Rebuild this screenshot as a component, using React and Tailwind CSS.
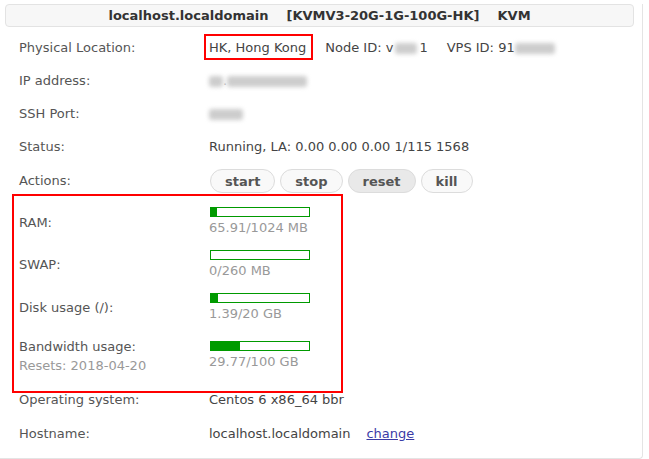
import React from 'react';

const resources = [
  { label: 'RAM:', used: 65.91, total: 1024, unit: 'MB', h: 'h-[44px]', pad: 'pt-[3px]' },
  { label: 'SWAP:', used: 0, total: 260, unit: 'MB', h: 'h-[43px]', pad: '' },
  { label: 'Disk usage (/):', used: 1.39, total: 20, unit: 'GB', h: 'h-[43px]', pad: '' },
  { label: 'Bandwidth usage:', used: 29.77, total: 100, unit: 'GB', h: 'h-[53px]', pad: '', sub: 'Resets: 2018-04-20' },
];

function Blur({ className = '' }) {
  return <span className={`inline-block h-[11px] rounded-[3px] bg-[#cdcdcd] blur-[2px] align-middle ${className}`} />;
}

function Row({ label, h, children }) {
  return (
    <div className={`grid grid-cols-[190px_1fr] items-center ${h}`}>
      <div className="text-[#555]">{label}</div>
      <div className="text-[#444] whitespace-nowrap">{children}</div>
    </div>
  );
}

function UsageBar({ used, total, unit }) {
  const fill = Math.round((used / total) * 98);
  return (
    <div className="flex flex-col">
      <div className="ml-[1px] w-[100px] h-[10px] border border-[#009a00] bg-white">
        <div className="h-full bg-[#009a00]" style={{ width: fill }} />
      </div>
      <div className="mt-[3px] leading-[16px] text-[#999]">
        {used}/{total} {unit}
      </div>
    </div>
  );
}

function ActionButton({ children, active }) {
  return (
    <button
      className={`h-[24px] px-[14px] rounded-full border border-[#dcdcdc] font-bold text-[13px] text-[#555] leading-none ${
        active ? 'bg-[#e9e9e9]' : 'bg-[#f9f9f9]'
      }`}
    >
      {children}
    </button>
  );
}

export default function App() {
  return (
    <div className="relative w-[643px] h-[455px] bg-white border-r border-b border-[#e4e4e4] rounded-br-[4px] font-['DejaVu_Sans',Verdana,sans-serif] text-[13px]">
      {/* Title bar */}
      <div className="ml-[5px] mt-[4px] w-[629px] h-[23px] flex items-center justify-center rounded-[4px] border border-[#e3e3e3] bg-[#f7f7f7] font-bold text-[#333]">
        localhost.localdomain&nbsp;&nbsp;&nbsp; [KVMV3-20G-1G-100G-HK]&nbsp;&nbsp;&nbsp; KVM
      </div>

      <div className="mt-[4px] pl-[19px]">
        <Row label="Physical Location:" h="h-[33px]">
          <span className="relative">
            HK, Hong Kong
            <span className="absolute -left-[5px] -right-[7px] -top-[6px] -bottom-[5px] border-2 border-[#ff0000]" />
          </span>
          <span className="ml-[19px]">Node ID: v</span>
          <Blur className="w-[22px] mx-[2px]" />
          <span>1</span>
          <span className="ml-[19px]">VPS ID: 91</span>
          <Blur className="w-[40px]" />
        </Row>
        <Row label="IP address:" h="h-[33px]">
          <Blur className="w-[14px]" />
          <span className="text-[#bbb]">.</span>
          <Blur className="w-[80px]" />
        </Row>
        <Row label="SSH Port:" h="h-[33px]">
          <Blur className="w-[34px]" />
        </Row>
        <Row label="Status:" h="h-[33px]">
          Running, LA: 0.00 0.00 0.00 1/115 1568
        </Row>
        <Row label="Actions:" h="h-[36px]">
          <div className="flex gap-[5px] ml-[1px]">
            <ActionButton>start</ActionButton>
            <ActionButton>stop</ActionButton>
            <ActionButton active>reset</ActionButton>
            <ActionButton>kill</ActionButton>
          </div>
        </Row>

        {resources.map((r) => (
          <Row
            key={r.label}
            h={r.h}
            label={
              r.sub ? (
                <div className="leading-[19px]">
                  <div>{r.label}</div>
                  <div className="text-[#999]">{r.sub}</div>
                </div>
              ) : (
                <div className={r.pad}>{r.label}</div>
              )
            }
          >
            <UsageBar used={r.used} total={r.total} unit={r.unit} />
          </Row>
        ))}

        <Row label="Operating system:" h="h-[36px]">
          Centos 6 x86_64 bbr
        </Row>
        <Row label="Hostname:" h="h-[32px]">
          localhost.localdomain
          <a href="#" className="ml-[16px] text-[#3b3ba6] underline">
            change
          </a>
        </Row>
      </div>

      {/* annotation box */}
      <div className="absolute left-[12px] top-[190px] w-[331px] h-[199px] border-2 border-[#ff0000] pointer-events-none" />
    </div>
  );
}
